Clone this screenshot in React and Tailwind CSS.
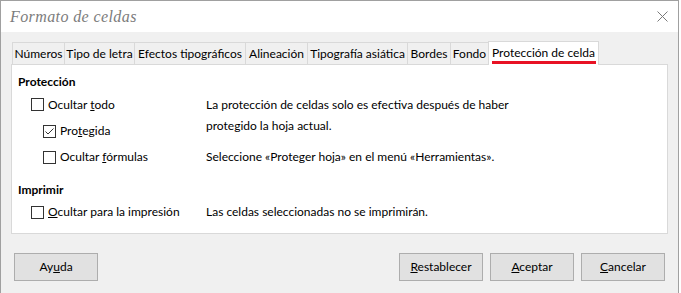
import React from "react";

const font = "font-['Lato','Noto_Sans',sans-serif]";

const tabs = [
  { name: "Números", w: "w-[53px]" },
  { name: "Tipo de letra", w: "w-[70px]" },
  { name: "Efectos tipográficos", w: "w-[111px]" },
  { name: "Alineación", w: "w-[62px]" },
  { name: "Tipografía asiática", w: "w-[100px]" },
  { name: "Bordes", w: "w-[43px]" },
  { name: "Fondo", w: "w-[38px]" },
];

const Check = ({ checked }) => (
  <svg width="13" height="13" viewBox="0 0 13 13" className="shrink-0">
    <rect x="0.5" y="0.5" width="12" height="12" fill="#fff" stroke="#333" />
    {checked && (
      <path d="M2.5 6.5 L5 9 L10.5 3.5" fill="none" stroke="#333" strokeWidth="1" />
    )}
  </svg>
);

const Option = ({ checked, indent, children }) => (
  <div className={`flex items-center gap-[4px] ${indent}`}>
    <Check checked={checked} />
    <span>{children}</span>
  </div>
);

const Button = ({ children, className = "" }) => (
  <button
    className={`w-[84px] h-[28px] bg-[#e1e1e1] border border-[#adadad] text-[12px] text-black ${className}`}
  >
    {children}
  </button>
);

export default function App() {
  return (
    <div className={`w-[681px] h-[293px] bg-white ${font} text-[12px] text-black`}>
      <div className="w-[679px] h-[293px] border-l border-t border-r border-[#a0a0a0] bg-[#f0f0f0] flex flex-col">
        {/* title bar */}
        <div className="h-[31px] bg-white flex items-center justify-between pl-[9px] pr-[10px]">
          <span className="font-['Liberation_Serif',serif] italic text-[16px] text-[#7c7c7c] tracking-[0.4px]">
            Formato de celdas
          </span>
          <svg width="11" height="11" viewBox="0 0 11 11">
            <path d="M0.5 0.5 L10.5 10.5 M10.5 0.5 L0.5 10.5" stroke="#7a7a7a" strokeWidth="1" />
          </svg>
        </div>

        <div className="flex-1 px-[10px] pt-[9px]">
          {/* tabs */}
          <div className="flex items-end h-[23px] pl-[1px]">
            {tabs.map((t, i) => (
              <div
                key={t.name}
                className={`${t.w} h-[22px] flex items-center justify-center border-t border-r border-[#d9d9d9] bg-[#f0f0f0] whitespace-nowrap ${
                  i === 0 ? "border-l" : ""
                }`}
              >
                {t.name}
              </div>
            ))}
            <div className="w-[111px] h-[24px] -mb-px relative z-10 bg-white border-t border-r border-l border-[#d9d9d9] flex flex-col items-center pt-[3px] -ml-px">
              <span className="whitespace-nowrap leading-[16px]">Protección de celda</span>
              <div className="w-[104px] h-[3px] bg-[#e81224]" />
            </div>
          </div>

          {/* panel */}
          <div className="h-[170px] bg-white border border-[#d9d9d9] pl-[6px] pt-[9px]">
            <div className="font-bold h-[16px] leading-[16px]">Protección</div>
            <div className="flex mt-[1px]">
              <div className="w-[188px]">
                <div className="h-[27px] flex items-center">
                  <Option indent="pl-[13px]">
                    Ocultar <u>t</u>odo
                  </Option>
                </div>
                <div className="h-[26px] flex items-center">
                  <Option checked indent="pl-[25px]">
                    Pro<u>t</u>egida
                  </Option>
                </div>
                <div className="h-[26px] flex items-center">
                  <Option indent="pl-[25px]">
                    Ocultar <u>f</u>órmulas
                  </Option>
                </div>
              </div>
              <div className="pt-[3px]">
                <p className="leading-[21px]">
                  La protección de celdas solo es efectiva después de haber
                  <br />
                  protegido la hoja actual.
                </p>
                <p className="leading-[21px] mt-[10px]">
                  Seleccione «Proteger hoja» en el menú «Herramientas».
                </p>
              </div>
            </div>
            <div className="font-bold h-[16px] leading-[16px] mt-[12px]">Imprimir</div>
            <div className="flex h-[26px] items-center mt-[1px]">
              <div className="w-[188px]">
                <Option indent="pl-[13px]">
                  <u>O</u>cultar para la impresión
                </Option>
              </div>
              <span>Las celdas seleccionadas no se imprimirán.</span>
            </div>
          </div>

          {/* buttons */}
          <div className="flex items-center mt-[19px]">
            <Button className="ml-[3px]">
              Ay<u>u</u>da
            </Button>
            <div className="flex-1" />
            <div className="flex gap-[7px] mr-[3px]">
              <Button>
                <u>R</u>establecer
              </Button>
              <Button>
                <u>A</u>ceptar
              </Button>
              <Button>
                <u>C</u>ancelar
              </Button>
            </div>
          </div>
        </div>
      </div>
    </div>
  );
}
